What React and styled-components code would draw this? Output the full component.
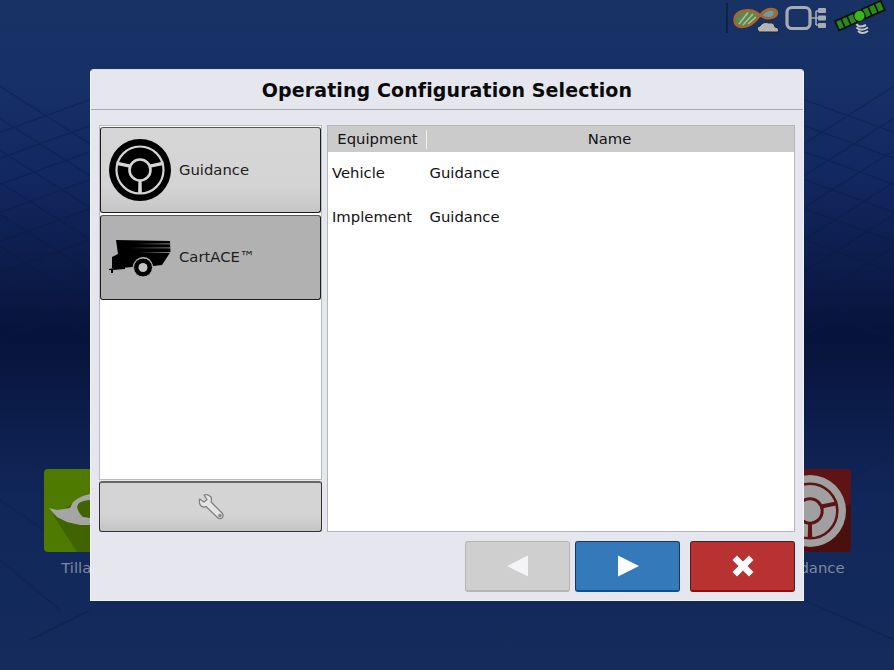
import React from 'react'
import styled, { createGlobalStyle } from 'styled-components'

const GlobalStyle = createGlobalStyle`
  html, body { margin: 0; padding: 0; height: 100%; }
  body { font-family: "DejaVu Sans", sans-serif; color: #111; overflow: hidden; }
`

const Screen = styled.div`
  position: relative;
  width: 894px;
  height: 670px;
  overflow: hidden;
  background: linear-gradient(180deg, #183265 0%, #173066 12%, #122860 26%, #0c1c4b 40%, #071339 50%, #0b1b48 60%, #11275a 75%, #142b5c 100%);
  display: flex;
  flex-direction: column;
`

const GridLines = styled.svg`
  position: absolute;
  inset: 0;
`

const StatusBar = styled.div`
  height: 34px;
  padding: 1px 9px 0 0;
  display: flex;
  justify-content: flex-end;
  align-items: center;
  gap: 8px;
  position: relative;
  svg { overflow: visible; }
`

const Divider = styled.div`
  width: 2px;
  height: 30px;
  background: #0e2146;
  margin-right: -3px;
`

const TileRow = styled.div`
  position: relative;
  margin-top: 434px;
  padding: 0 43px 0 44px;
  display: flex;
  justify-content: space-between;
`

const Tile = styled.div`
  width: 83px;
  display: flex;
  flex-direction: column;
  align-items: center;
  gap: 6px;
`

const TileFace = styled.div`
  position: relative;
  width: 83px;
  height: 83px;
  border-radius: 4px;
  background: ${p => p.$bg};
  overflow: hidden;
  display: flex;
  align-items: center;
  justify-content: center;
`

const TileShadow = styled.svg`
  position: absolute;
  inset: 0;
`

const TileLabel = styled.div`
  font-size: 14.8px;
  line-height: 20px;
  color: #7e889c;
  white-space: nowrap;
`

const Dialog = styled.div`
  position: absolute;
  left: 90px;
  top: 69px;
  width: 714px;
  height: 532px;
  box-sizing: border-box;
  background: #e5e6ee;
  border: 1px solid #f4f4f8;
  border-top-color: #dcdde4;
  border-radius: 4px 4px 0 0;
  display: flex;
  flex-direction: column;
`

const TitleBar = styled.div`
  height: 39px;
  border-bottom: 1px solid #a9a9ad;
  display: flex;
  align-items: center;
  justify-content: center;
  font-size: 19px;
  font-weight: 700;
  letter-spacing: 0.1px;
  color: #0a0a0a;
`

const Body = styled.div`
  flex: 1;
  padding: 15px 8px 0 8px;
  display: grid;
  grid-template-columns: 223px 468px;
  column-gap: 5px;
  grid-template-rows: 407px;
`

const LeftColumn = styled.div`
  display: flex;
  flex-direction: column;
  gap: 1px;
`

const ModeList = styled.div`
  flex: 1;
  background: #fff;
  border: 1px solid #b9bac2;
  padding: 1px 0 0;
  display: flex;
  flex-direction: column;
  gap: 2px;
`

const ModeButton = styled.div`
  height: ${p => p.$h}px;
  box-sizing: border-box;
  border: 1px solid #1c1c1c;
  border-top-color: #555;
  border-radius: 3px;
  background: ${p => p.$active
    ? '#b1b1b1'
    : 'linear-gradient(180deg, #d6d6d6 0%, #d4d4d4 70%, #c6c6c6 100%)'};
  display: flex;
  align-items: center;
  gap: 8px;
  padding-left: 8px;
  font-size: 14.8px;
  color: #1d1d1d;
`

const ModeLabel = styled.span`
  margin-bottom: 2px;
`

const IconSlot = styled.div`
  width: 62px;
  height: 62px;
  display: flex;
  align-items: center;
  justify-content: center;
`

const ToolButton = styled.div`
  height: 51px;
  box-sizing: border-box;
  border: 1px solid #333;
  border-top: 2px solid #666;
  border-radius: 3px;
  background: linear-gradient(180deg, #d4d4d4 0%, #d4d4d4 65%, #c4c4c4 100%);
  display: flex;
  align-items: center;
  justify-content: center;
`

const TablePanel = styled.div`
  background: #fff;
  border: 1px solid #b4b5bc;
  display: flex;
  flex-direction: column;
`

const HeaderRow = styled.div`
  height: 26px;
  background: #cbcbcb;
  display: grid;
  grid-template-columns: 99px 1fr;
  font-size: 14.8px;
  line-height: 26px;
  color: #111;
`

const HeaderCell = styled.div`
  text-align: center;
  position: relative;
  &:first-child::after {
    content: '';
    position: absolute;
    right: 0;
    top: 4px;
    bottom: 3px;
    width: 1px;
    background: #f0f0f0;
  }
  &:last-child { padding-right: 2px; }
`

const Row = styled.div`
  height: 44px;
  display: grid;
  grid-template-columns: 97.5px 1fr;
  padding-left: 4px;
  font-size: 14.8px;
  line-height: 42px;
  color: #111;
`

const Footer = styled.div`
  flex: 1;
  padding: 9px 8px 8px 0;
  display: flex;
  justify-content: flex-end;
  gap: 5px;
`

const NavButton = styled.div`
  width: 105px;
  height: 51px;
  box-sizing: border-box;
  margin-left: ${p => p.$gap || 0}px;
  border-radius: 3px;
  display: flex;
  align-items: center;
  justify-content: center;
  background: ${p => p.$bg};
  border: 1px solid ${p => p.$edge};
  border-bottom: 2px solid ${p => p.$low};
`

const Steering = ({ size, fg, bg }) => (
  <svg width={size} height={size} viewBox="-31 -31 62 62" style={{ position: 'relative' }}>
    <circle r="31" fill={fg} />
    <circle r="23.5" fill="none" stroke={bg} strokeWidth="2.2" />
    <circle r="10.5" fill="none" stroke={bg} strokeWidth="2.6" />
    <path d="M-23.5 -8.5 L-9.5 -5.5 L-9 -2 L-23.5 -5 Z M23.5 -8.5 L9.5 -5.5 L9 -2 L23.5 -5 Z M-1.6 10 L-1.9 23 L1.9 23 L1.6 10 Z" fill={bg} />
  </svg>
)

const Cart = () => (
  <svg width="62" height="40" viewBox="0 0 62 40">
    <defs>
      <linearGradient id="stripe" x1="0" x2="1" y1="0" y2="0">
        <stop offset="0" stopColor="#b1b1b1" stopOpacity="0" />
        <stop offset="1" stopColor="#b1b1b1" />
      </linearGradient>
    </defs>
    <path d="M7 2 L61 3 L61.5 14 L53 27 L44 28 Q42 19 34 19 Q26 19 23.5 29 L12 30 L3 30 L3 19 L9 16 Z" fill="#000" />
    <path d="M0 31 L16 28 V31 L4 32 V35 H2 V32 L0 32 Z" fill="#000" />
    <rect x="26" y="5.5" width="36" height="0.8" fill="url(#stripe)" />
    <rect x="20" y="9.5" width="42" height="0.8" fill="url(#stripe)" />
    <rect x="30" y="14" width="32" height="0.8" fill="url(#stripe)" />
    <circle cx="34" cy="29.5" r="9.5" fill="#000" stroke="#b1b1b1" strokeWidth="1" />
    <circle cx="34" cy="29.5" r="4.5" fill="#c4c4c4" />
  </svg>
)

const Wrench = () => (
  <svg width="28" height="28" viewBox="0 0 28 28">
    <path d="M2.5 6 L7 9 L10 6.5 L7 2 Q11 0.5 14 4 Q15 7 14 9 L25.5 20.5 Q27 23 25 25 Q22.5 26.5 20.5 24.5 L9 13.5 Q6 15 3.5 12.5 Q2 10 2.5 6 Z" fill="#e4e4e4" stroke="#7c7c7c" strokeWidth="1.2" strokeLinejoin="round" />
    <circle cx="23" cy="22.6" r="1.8" fill="#888" />
  </svg>
)

const Infinity = () => (
  <svg width="44" height="33" viewBox="0 0 44 33">
    <path d="M1.5 18 C1.5 10 10 7.5 18 8.5 C24 9 27 15 33 16 C40 17 44 14 44 11 C44 7 38 6 33 8 C28 10 26 16 21 20 C15 26 1.5 28 1.5 18 Z" fill="#5f8754" stroke="#b0622c" strokeWidth="2.4" />
    <path d="M6 22 L15 10.5 M10 23 L20 12 M15 22 L23 15" stroke="#a8c48a" strokeWidth="1.5" />
    <path d="M30 14 Q33 8 40 9 Q42 13 37 15 Z" fill="#7796a8" />
    <path d="M26 30 Q22 25 27 24 Q30 19 36 21 Q41 20 42 25 Q47 26 45 30 Z" fill="#b4b4b4" stroke="#222" strokeWidth="1" />
  </svg>
)

const Connection = () => (
  <svg width="42" height="26" viewBox="0 0 42 26">
    <rect x="2" y="2.5" width="23" height="21" rx="5" fill="none" stroke="#a7abb3" strokeWidth="3.2" />
    <path d="M26 13 H31 M31 6 V20 M31 6 H33 M31 13 H33 M31 20 H33" stroke="#a7abb3" strokeWidth="1.6" fill="none" />
    <rect x="33" y="3" width="8" height="5" rx="1" fill="#a7abb3" />
    <rect x="33" y="10.5" width="8" height="5" rx="1" fill="#a7abb3" />
    <rect x="33" y="18" width="8" height="5" rx="1" fill="#a7abb3" />
  </svg>
)

const Satellite = () => (
  <svg width="50" height="36" viewBox="0 0 50 36">
    <g transform="rotate(-24 24 16)">
      <rect x="0" y="11" width="20" height="10" fill="#2c8a1c" stroke="#0c120c" strokeWidth="1.8" />
      <rect x="29" y="11" width="21" height="10" fill="#2c8a1c" stroke="#0c120c" strokeWidth="1.8" />
      <path d="M6.5 11 V21 M13 11 V21 M36 11 V21 M43 11 V21" stroke="#0c120c" strokeWidth="1.6" />
      <path d="M20 16 H29" stroke="#0c120c" strokeWidth="3" />
      <circle cx="24.5" cy="16" r="5.6" fill="#35b818" stroke="#0c120c" strokeWidth="1" />
    </g>
    <path d="M21.5 24 Q24 28.5 31 25 M21.5 27.5 Q26 32 33 27.5 M23 31 Q27 35 33 31" stroke="#c4c4c4" strokeWidth="2" fill="none" />
  </svg>
)

const Plough = () => (
  <svg width="83" height="83" viewBox="0 0 83 83">
    <path d="M9 46 L33 83 L83 83 L83 30 L46 25 Z" fill="#3f6400" />
    <path d="M5 39 L13 41 L26 39 L29 33 Q36 27 46 25 L46 31 Q33 32 33 38 Q35 45 39 48 L46 49 L46 56 L36 56 L23 53 L13 48 Z" fill="#a5a5a5" />
  </svg>
)

// dark lattice of the wallpaper, only the parts that show around the dialog
const latticeA = [96, 122, 148, 176, 205, 236, 268, 302]
const latticeB = [30, 62, 94, 126, 158, 190, 222]

const App = () => {
  return (
    <Screen>
      <GlobalStyle />
      <GridLines width="894" height="670" viewBox="0 0 894 670">
        <g stroke="#0c1c45" strokeWidth="1.2" fill="none" opacity="0.5">
          {latticeA.map(y => <line key={y} x1="-10" y1={y + 40} x2="100" y2={y} />)}
          {latticeB.map(y => <line key={y} x1="-10" y1={y + 50} x2="100" y2={y + 120} />)}
          {latticeA.map(y => <line key={y} x1="794" y1={y} x2="904" y2={y + 40} />)}
          {latticeB.map(y => <line key={y} x1="794" y1={y + 120} x2="904" y2={y + 50} />)}
        </g>
        <g stroke="#0f2250" strokeWidth="1.2" fill="none" opacity="0.7">
          <path d="M0 440 L44 470 M0 500 L44 530 M0 560 L60 610 M30 640 L90 610 M804 600 L894 640 M850 480 L894 450" />
        </g>
      </GridLines>
      <StatusBar>
        <Divider />
        <Infinity />
        <Connection />
        <Satellite />
      </StatusBar>
      <TileRow>
        <Tile>
          <TileFace $bg="#4f7a00"><Plough /></TileFace>
          <TileLabel>Tillage</TileLabel>
        </Tile>
        <Tile>
          <TileFace $bg="#5e1414">
            <TileShadow width="83" height="83" viewBox="0 0 83 83">
              <path d="M10 60 L40 83 L83 83 L83 35 Z" fill="#4a0f0f" />
            </TileShadow>
            <Steering size={72} fg="#a0a0a0" bg="#5e1414" />
          </TileFace>
          <TileLabel>Guidance</TileLabel>
        </Tile>
      </TileRow>
      <Dialog>
        <TitleBar>Operating Configuration Selection</TitleBar>
        <Body>
          <LeftColumn>
            <ModeList>
              <ModeButton $h={86}>
                <IconSlot><Steering size={62} fg="#000" bg="#d4d4d4" /></IconSlot>
                <ModeLabel>Guidance</ModeLabel>
              </ModeButton>
              <ModeButton $h={85} $active>
                <IconSlot><Cart /></IconSlot>
                <ModeLabel>CartACE™</ModeLabel>
              </ModeButton>
            </ModeList>
            <ToolButton><Wrench /></ToolButton>
          </LeftColumn>
          <TablePanel>
            <HeaderRow>
              <HeaderCell>Equipment</HeaderCell>
              <HeaderCell>Name</HeaderCell>
            </HeaderRow>
            <Row><span>Vehicle</span><span>Guidance</span></Row>
            <Row><span>Implement</span><span>Guidance</span></Row>
          </TablePanel>
        </Body>
        <Footer>
          <NavButton $bg="#cfcfcf" $edge="#b5b5b5" $low="#b5b5b5">
            <svg width="22" height="22" viewBox="0 0 22 22"><path d="M0 11 L21 0.5 V21.5 Z" fill="#f4f4f6" /></svg>
          </NavButton>
          <NavButton $bg="#347abb" $edge="#17385c" $low="#0a4f8f">
            <svg width="22" height="22" viewBox="0 0 22 22"><path d="M22 11 L1 0.5 V21.5 Z" fill="#fff" /></svg>
          </NavButton>
          <NavButton $gap={5} $bg="#b83232" $edge="#4c2020" $low="#930c0c">
            <svg width="22" height="22" viewBox="0 0 22 22"><path d="M0.5 5 L5 0.5 L11 6.5 L17 0.5 L21.5 5 L15.5 11 L21.5 17 L17 21.5 L11 15.5 L5 21.5 L0.5 17 L6.5 11 Z" fill="#fff" /></svg>
          </NavButton>
        </Footer>
      </Dialog>
    </Screen>
  )
}

export default App
